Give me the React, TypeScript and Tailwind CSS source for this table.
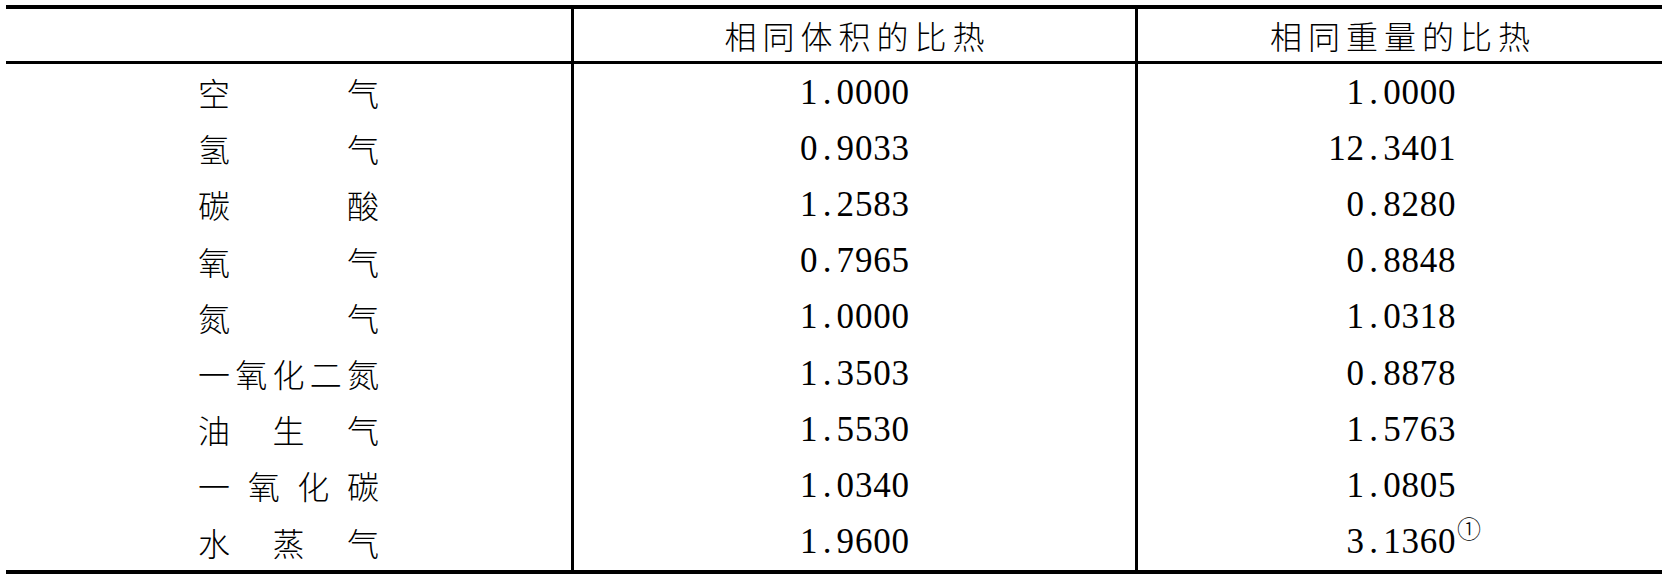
const rows = [
  { name: ["空", "气"], vol: "1.0000", wt: "1.0000" },
  { name: ["氢", "气"], vol: "0.9033", wt: "12.3401" },
  { name: ["碳", "酸"], vol: "1.2583", wt: "0.8280" },
  { name: ["氧", "气"], vol: "0.7965", wt: "0.8848" },
  { name: ["氮", "气"], vol: "1.0000", wt: "1.0318" },
  { name: ["一", "氧", "化", "二", "氮"], vol: "1.3503", wt: "0.8878" },
  { name: ["油", "生", "气"], vol: "1.5530", wt: "1.5763" },
  { name: ["一", "氧", "化", "碳"], vol: "1.0340", wt: "1.0805" },
  { name: ["水", "蒸", "气"], vol: "1.9600", wt: "3.1360", note: true },
];

const cjk = "[font-family:'Noto_Sans_CJK_SC',sans-serif]";

function Num({ value }: { value: string }) {
  return (
    <span className="[font-family:'Liberation_Serif','Times_New_Roman',serif] text-[35px] leading-none whitespace-nowrap">
      {value.split("").map((c, i) => (
        <span key={i} className="inline-block w-[18.3px] text-center">
          {c}
        </span>
      ))}
    </span>
  );
}

export default function App() {
  return (
    <div className="w-[1669px] h-[579px] bg-white pt-[5px] pl-[6px] text-black">
      <div className="w-[1656px] border-t-4 border-b-4 border-black">
        <div className="grid grid-cols-[565px_564px_527px] h-[55px] border-b-[3px] border-black">
          <div />
          <div className={`border-l-[3px] border-black flex items-center justify-center ${cjk} font-light text-[32px] tracking-[6px] leading-none`}>
            <span className="pl-[6px]">相同体积的比热</span>
          </div>
          <div className={`border-l-[3px] border-black flex items-center justify-center ${cjk} font-light text-[32px] tracking-[6px] leading-none`}>
            <span className="pl-[6px]">相同重量的比热</span>
          </div>
        </div>
        {rows.map((r, i) => (
          <div key={i} className="grid grid-cols-[565px_564px_527px] h-[56.2px]">
            <div className="flex items-center justify-center">
              <div className={`w-[181px] flex justify-between ${cjk} font-light text-[32px] leading-none`}>
                {r.name.map((c, j) => (
                  <span key={j}>{c}</span>
                ))}
              </div>
            </div>
            <div className="border-l-[3px] border-black flex items-center justify-center">
              <Num value={r.vol} />
            </div>
            <div className="border-l-[3px] border-black flex items-center justify-end pr-[206px]">
              <div className="relative">
                <Num value={r.wt} />
                {r.note && (
                  <span className={`absolute left-full top-[-8px] ml-[1px] ${cjk} font-light text-[24px] leading-none`}>
                    ①
                  </span>
                )}
              </div>
            </div>
          </div>
        ))}
      </div>
    </div>
  );
}
